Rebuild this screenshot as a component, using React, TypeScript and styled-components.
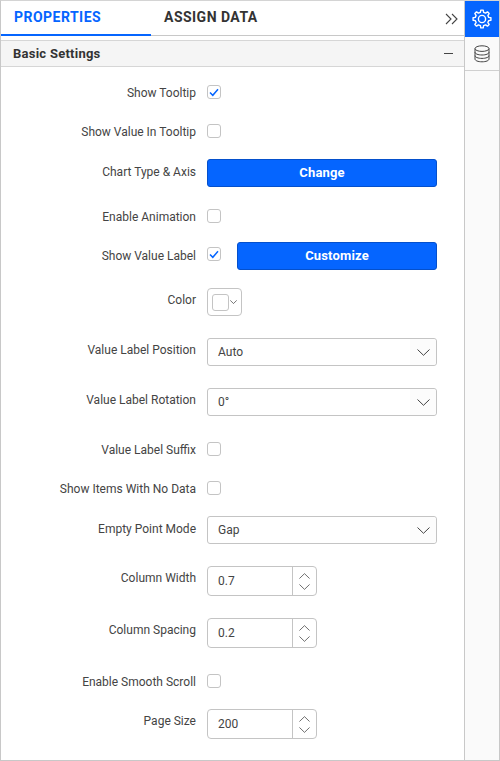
import React from "react";
import styled, { createGlobalStyle } from "styled-components";

const Global = createGlobalStyle`
  html, body { margin: 0; padding: 0; background: #fff; }
  body { font-family: Roboto, "Liberation Sans", sans-serif; }
  * { box-sizing: border-box; }
`;

const Shell = styled.div`
  width: 500px; height: 761px; display: flex;
  border: 1px solid #c8c8c8; border-top-color: #d4d4d4; background: #fff; overflow: hidden;
`;
const Main = styled.div`flex: 1; min-width: 0; display: flex; flex-direction: column;`;
const TabBar = styled.div`
  height: 35px; display: flex; align-items: stretch; position: relative;
  border-bottom: 1px solid #c8c8c8;
`;
const Tab = styled.div<{ $active?: boolean }>`
  width: 150px; height: 35px; padding: 8px 0 0 13px;
  font-size: 14px; line-height: 16px; font-weight: 700; letter-spacing: 0.47px;
  color: ${p => (p.$active ? "#0565ff" : "#333")};
  border-bottom: ${p => (p.$active ? "2px solid #0565ff" : "none")};
`;
const Collapse = styled.div`
  position: absolute; right: 6px; top: 10px; width: 13px; height: 14px; color: #444;
`;
const SectionHead = styled.div`
  margin-top: 4px; height: 27px; padding: 0 12px; display: flex; align-items: center;
  justify-content: space-between; background: #f5f5f5;
  border-top: 1px solid #d6d6d6; border-bottom: 1px solid #d6d6d6;
  font-size: 13px; font-weight: 700; letter-spacing: 0.25px; color: #333;
`;
const Minus = styled.span`width: 9px; height: 1px; background: #444; margin-right: -1px;`;
const Form = styled.div`display: flex; flex-direction: column; padding-top: 18px;`;
const Row = styled.div<{ $gap: number; $h: number }>`
  margin-top: ${p => p.$gap}px; height: ${p => p.$h}px; display: flex; align-items: flex-start; gap: 11px;
`;
const Label = styled.div<{ $pad: number }>`
  width: 195px; flex: none; text-align: right; font-size: 12px; line-height: 14px; color: #444;
  padding-top: ${p => p.$pad}px; white-space: nowrap;
`;
const Box = styled.div<{ $mt?: number }>`
  width: 14px; height: 14px; margin-top: ${p => p.$mt ?? 0}px;
  border: 1px solid #c4c4c4; border-radius: 3px; background: #fff;
  display: flex; align-items: center; justify-content: center; flex: none;
`;
const Button = styled.div<{ $w: number; $ml?: number }>`
  width: ${p => p.$w}px; height: 28px; margin-left: ${p => p.$ml ?? 0}px; padding-bottom: 2px;
  background: #0565ff; border: 1px solid #0450cc; border-radius: 3px;
  color: #fff; font-size: 13px; font-weight: 700; letter-spacing: 0.15px;
  display: flex; align-items: center; justify-content: center;
`;
const ColorPick = styled.div`
  width: 35px; height: 28px; border: 1px solid #c4c4c4; border-radius: 4px; padding: 4px;
  display: flex; align-items: center; gap: 1px;
`;
const Swatch = styled.span`width: 17px; height: 17px; border: 1px solid #c4c4c4; border-radius: 3px; background: #fff;`;
const Select = styled.div`
  width: 230px; height: 28px; border: 1px solid #c4c4c4; border-radius: 3px; padding-left: 10px;
  display: flex; align-items: center; justify-content: space-between;
  font-size: 12px; color: #444;
`;
const SelectIcon = styled.div`
  width: 26px; height: 100%; display: flex; align-items: center; justify-content: center;
  background: #fcfcfc; border-radius: 0 3px 3px 0; color: #444;
`;
const Spinner = styled.div`
  width: 110px; height: 30px; border: 1px solid #c4c4c4; border-radius: 4px; display: flex;
  font-size: 12px; color: #444;
`;
const SpinValue = styled.div`flex: 1; padding-left: 10px; display: flex; align-items: center;`;
const SpinBtns = styled.div`
  width: 24px; border-left: 1px solid #c4c4c4; display: flex; flex-direction: column;
  align-items: center; justify-content: center; gap: 5px; color: #555;
`;
const Side = styled.div`width: 35px; flex: none; background: #fafafa; border-left: 1px solid #c8c8c8; display: flex; flex-direction: column;`;
const SideBtn = styled.div<{ $active?: boolean }>`
  height: ${p => (p.$active ? 36 : 34)}px; display: flex; align-items: center; justify-content: center;
  background: ${p => (p.$active ? "#0565ff" : "transparent")};
  color: ${p => (p.$active ? "#fff" : "#444")};
  border-bottom: ${p => (p.$active ? "none" : "1px solid #d0d0d0")};
`;

const Check = () => (
  <svg width="10" height="9" viewBox="0 0 10 9" fill="none"><path d="M1 4.5 L3.8 7.3 L9 1.3" stroke="#0565ff" strokeWidth="1.5" /></svg>
);
const Chevron = ({ up, w = 13, h = 7 }: { up?: boolean; w?: number; h?: number }) => (
  <svg width={w} height={h} viewBox="0 0 13 7" fill="none">
    <path d={up ? "M0.5 6.5 L6.5 0.7 L12.5 6.5" : "M0.5 0.5 L6.5 6.3 L12.5 0.5"} stroke="currentColor" strokeWidth="1" />
  </svg>
);

const gearPath = (() => {
  const teeth = 8;
  const outer = 9;
  const root = 6.9;
  const pts: string[] = [];
  for (let i = 0; i < teeth; i++) {
    const a = (i / teeth) * Math.PI * 2 - Math.PI / 2;
    const step = (Math.PI * 2) / teeth;
    const add = (r: number, off: number) => {
      const t = a + off * step;
      pts.push(`${(10 + r * Math.cos(t)).toFixed(2)} ${(10 + r * Math.sin(t)).toFixed(2)}`);
    };
    add(root, -0.3);
    add(outer, -0.17);
    add(outer, 0.17);
    add(root, 0.3);
  }
  return `M${pts.join(" L")} Z`;
})();

const Gear = () => (
  <svg width="20" height="20" viewBox="0 0 20 20" fill="none" stroke="currentColor" strokeWidth="1.4" strokeLinejoin="round">
    <path d={gearPath} />
    <circle cx="10" cy="10" r="3.6" />
  </svg>
);
const Db = () => (
  <svg width="16" height="18" viewBox="0 0 16 18" fill="none" stroke="currentColor" strokeWidth="1">
    <ellipse cx="8" cy="3.6" rx="7" ry="2.8" />
    <path d="M1 3.6 V14 C1 15.6 4 16.8 8 16.8 C12 16.8 15 15.6 15 14 V3.6" />
    <path d="M1 7.2 C1 8.8 4 10 8 10 C12 10 15 8.8 15 7.2" />
    <path d="M1 10.6 C1 12.2 4 13.4 8 13.4 C12 13.4 15 12.2 15 10.6" />
  </svg>
);

const Spin = ({ v }: { v: string }) => (
  <Spinner>
    <SpinValue>{v}</SpinValue>
    <SpinBtns><Chevron up w={11} h={6} /><Chevron w={11} h={6} /></SpinBtns>
  </Spinner>
);
const Sel = ({ v }: { v: string }) => (
  <Select>{v}<SelectIcon><Chevron w={13} h={7} /></SelectIcon></Select>
);

export default function App() {
  return (
    <>
      <Global />
      <Shell>
        <Main>
          <TabBar>
            <Tab $active>PROPERTIES</Tab>
            <Tab>ASSIGN DATA</Tab>
            <Collapse>
              <svg width="13" height="14" viewBox="0 0 13 14" fill="none" stroke="currentColor" strokeWidth="1.1">
                <path d="M1 2 L6 7 L1 12" /><path d="M7 2 L12 7 L7 12" />
              </svg>
            </Collapse>
          </TabBar>
          <SectionHead>Basic Settings<Minus /></SectionHead>
          <Form>
            <Row $gap={0} $h={14}><Label $pad={1}>Show Tooltip</Label><Box><Check /></Box></Row>
            <Row $gap={25} $h={14}><Label $pad={1}>Show Value In Tooltip</Label><Box /></Row>
            <Row $gap={21} $h={28}><Label $pad={6}>Chart Type &amp; Axis</Label><Button $w={230}>Change</Button></Row>
            <Row $gap={22} $h={14}><Label $pad={1}>Enable Animation</Label><Box /></Row>
            <Row $gap={19} $h={28}><Label $pad={7}>Show Value Label</Label><Box $mt={5}><Check /></Box><Button $w={200} $ml={5}>Customize</Button></Row>
            <Row $gap={18} $h={28}><Label $pad={5}>Color</Label><ColorPick><Swatch /><Chevron w={7} h={4} /></ColorPick></Row>
            <Row $gap={22} $h={28}><Label $pad={5}>Value Label Position</Label><Sel v="Auto" /></Row>
            <Row $gap={22} $h={28}><Label $pad={5}>Value Label Rotation</Label><Sel v="0°" /></Row>
            <Row $gap={26} $h={14}><Label $pad={1}>Value Label Suffix</Label><Box /></Row>
            <Row $gap={25} $h={14}><Label $pad={1}>Show Items With No Data</Label><Box /></Row>
            <Row $gap={21} $h={28}><Label $pad={6}>Empty Point Mode</Label><Sel v="Gap" /></Row>
            <Row $gap={22} $h={30}><Label $pad={5}>Column Width</Label><Spin v="0.7" /></Row>
            <Row $gap={22} $h={30}><Label $pad={5}>Column Spacing</Label><Spin v="0.2" /></Row>
            <Row $gap={26} $h={14}><Label $pad={1}>Enable Smooth Scroll</Label><Box /></Row>
            <Row $gap={21} $h={30}><Label $pad={5}>Page Size</Label><Spin v="200" /></Row>
          </Form>
        </Main>
        <Side>
          <SideBtn $active><Gear /></SideBtn>
          <SideBtn><Db /></SideBtn>
        </Side>
      </Shell>
    </>
  );
}
